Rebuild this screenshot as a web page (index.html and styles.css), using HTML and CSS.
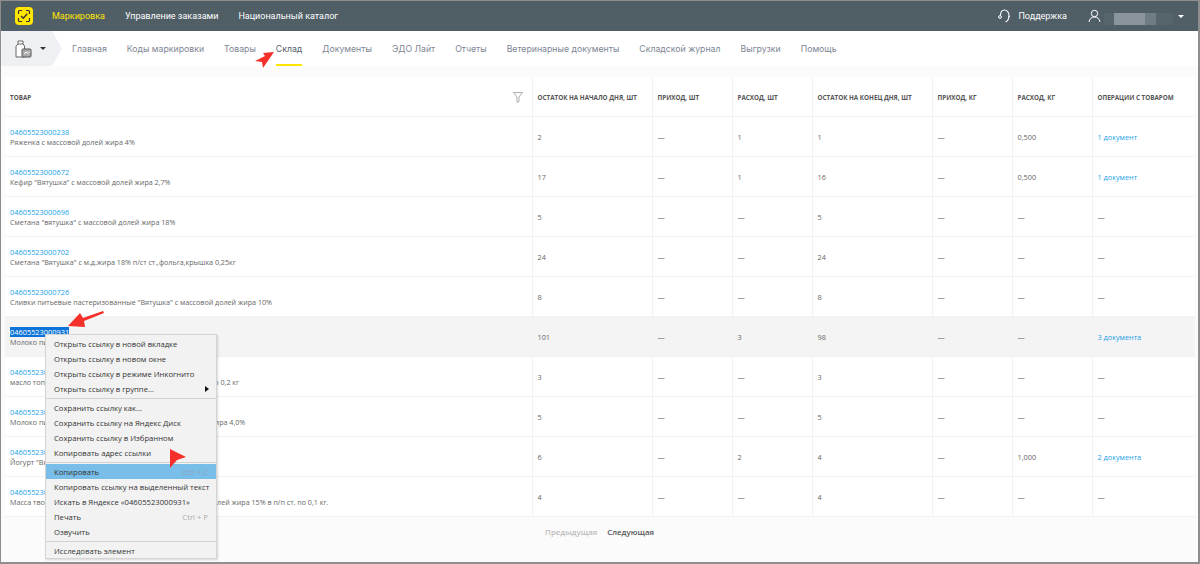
FILE: index.html
```html
<!DOCTYPE html>
<html lang="ru">
<head>
    <meta charset="UTF-8">
    <title>Склад</title>
    <link rel="stylesheet" href="styles.css">
</head>
<body>
    <div class="window">
        <header class="topbar">
            <svg class="logo" width="18" height="18" viewBox="0 0 18 18">
                <rect width="18" height="18" rx="4" fill="#ffe600"/>
                <path d="M3.500 7V4.500a1 1 0 0 1 1-1H7M11 3.500h2.500a1 1 0 0 1 1 1V7M14.500 11v2.500a1 1 0 0 1-1 1H11M7 14.500H4.500a1 1 0 0 1-1-1V11" fill="none" stroke="#333" stroke-width="1.200"/>
                <path d="M6 9l2.200 2.200L12.300 6.800" fill="none" stroke="#333" stroke-width="1.300"/>
            </svg>
            <nav class="topnav">
                <a class="active">Маркировка</a>
                <a>Управление заказами</a>
                <a>Национальный каталог</a>
            </nav>
            <div class="support">
                <svg width="13" height="14" viewBox="0 0 13 14"><path d="M2.500 6.500C2.500 3 4 1 6.500 1s4.500 2.500 4.500 5.500c0 3-1 5.500-3.500 6.500" fill="none" stroke="#fff" stroke-width="1.100"/><circle cx="2" cy="8" r="1.400" fill="none" stroke="#fff"/><circle cx="11" cy="7.500" r=".8" fill="#fff"/></svg>
                <span>Поддержка</span>
            </div>
            <div class="user">
                <svg width="13" height="14" viewBox="0 0 13 14"><circle cx="6.500" cy="4.500" r="3.200" fill="none" stroke="#fff"/><path d="M1 13c.5-3 2.300-5 5.500-5s5 2 5.500 5" fill="none" stroke="#fff"/></svg>
                <span class="blur"></span>
                <span class="caret"></span>
            </div>
        </header>

        <nav class="subnav">
            <div class="product-switch">
                <svg width="17" height="18" viewBox="0 0 17 18"><path d="M3 1h5v3l1.500 2v11H1V6l2-2z" fill="#fff" stroke="#666"/><path d="M3 4h5" stroke="#666"/><rect x="7" y="9" width="9" height="8" rx="1" fill="#aaa" stroke="#555"/><path d="M9 14l2-2 2 1.500 2-2" fill="none" stroke="#fff"/></svg>
                <span class="caret dark"></span>
            </div>
            <a>Главная</a>
            <a>Коды маркировки</a>
            <a>Товары</a>
            <a class="current">Склад</a>
            <a>Документы</a>
            <a>ЭДО Лайт</a>
            <a>Отчеты</a>
            <a>Ветеринарные документы</a>
            <a>Складской журнал</a>
            <a>Выгрузки</a>
            <a>Помощь</a>
        </nav>

        <main class="content">
            <table class="stock">
                <colgroup>
                    <col class="c-name"><col class="c-wide"><col class="c-mid"><col class="c-mid"><col class="c-wide"><col class="c-mid"><col class="c-mid"><col>
                </colgroup>
                <thead>
                    <tr>
                        <th>
                            <div class="th-name">Товар
                                <svg width="10" height="11" viewBox="0 0 10 11"><path d="M.5.500h9L6 5v4.500L4 10.500V5z" fill="none" stroke="#999" stroke-width=".8"/></svg>
                            </div>
                        </th>
                        <th>Остаток на начало дня, шт</th>
                        <th>Приход, шт</th>
                        <th>Расход, шт</th>
                        <th>Остаток на конец дня, шт</th>
                        <th>Приход, кг</th>
                        <th>Расход, кг</th>
                        <th>Операции с товаром</th>
                    </tr>
                </thead>
                <tbody>
                    <tr>
                        <td><a>04605523000238</a><p>Ряженка с массовой долей жира 4%</p></td>
                        <td>2</td><td>—</td><td>1</td><td>1</td><td>—</td><td>0,500</td><td><a>1 документ</a></td>
                    </tr>
                    <tr>
                        <td><a>04605523000672</a><p>Кефир "Вятушка" с массовой долей жира 2,7%</p></td>
                        <td>17</td><td>—</td><td>1</td><td>16</td><td>—</td><td>0,500</td><td><a>1 документ</a></td>
                    </tr>
                    <tr>
                        <td><a>04605523000696</a><p>Сметана "вятушка" с массовой долей жира 18%</p></td>
                        <td>5</td><td>—</td><td>—</td><td>5</td><td>—</td><td>—</td><td>—</td>
                    </tr>
                    <tr>
                        <td><a>04605523000702</a><p>Сметана "Вятушка" с м.д.жира 18% п/ст ст.,фольга,крышка 0,25кг</p></td>
                        <td>24</td><td>—</td><td>—</td><td>24</td><td>—</td><td>—</td><td>—</td>
                    </tr>
                    <tr>
                        <td><a>04605523000726</a><p>Сливки питьевые пастеризованные "Вятушка" с массовой долей жира 10%</p></td>
                        <td>8</td><td>—</td><td>—</td><td>8</td><td>—</td><td>—</td><td>—</td>
                    </tr>
                    <tr class="hovered">
                        <td><a class="selected">04605523000931</a><p>Молоко питьевое</p></td>
                        <td>101</td><td>—</td><td>3</td><td>98</td><td>—</td><td>—</td><td><a>3 документа</a></td>
                    </tr>
                    <tr>
                        <td><a>04605523000948</a><p>масло топленое "Вятушка" с массовой долей жира 99,0% по 0,2 кг</p></td>
                        <td>3</td><td>—</td><td>—</td><td>3</td><td>—</td><td>—</td><td>—</td>
                    </tr>
                    <tr>
                        <td><a>04605523000955</a><p>Молоко питьевое отборное "Вятушка" с массовой долей жира 4,0%</p></td>
                        <td>5</td><td>—</td><td>—</td><td>5</td><td>—</td><td>—</td><td>—</td>
                    </tr>
                    <tr>
                        <td><a>04605523000962</a><p>Йогурт "Вятушка"</p></td>
                        <td>6</td><td>—</td><td>2</td><td>4</td><td>—</td><td>1,000</td><td><a>2 документа</a></td>
                    </tr>
                    <tr>
                        <td><a>04605523000979</a><p>Масса творожная с наполнителем "Вятушка" с массовой долей жира 15% в п/п ст. по 0,1 кг.</p></td>
                        <td>4</td><td>—</td><td>—</td><td>4</td><td>—</td><td>—</td><td>—</td>
                    </tr>
                </tbody>
            </table>
            <div class="pager">
                <span class="off">Предыдущая</span>
                <span>Следующая</span>
            </div>
        </main>

        <ul class="context-menu">
            <li>Открыть ссылку в новой вкладке</li>
            <li>Открыть ссылку в новом окне</li>
            <li>Открыть ссылку в режиме Инкогнито</li>
            <li class="has-sub">Открыть ссылку в группе...</li>
            <li class="sep"></li>
            <li>Сохранить ссылку как...</li>
            <li>Сохранить ссылку на Яндекс Диск</li>
            <li>Сохранить ссылку в Избранном</li>
            <li>Копировать адрес ссылки</li>
            <li class="sep"></li>
            <li class="picked">Копировать<span>Ctrl + C</span></li>
            <li>Копировать ссылку на выделенный текст</li>
            <li>Искать в Яндексе «04605523000931»</li>
            <li>Печать<span>Ctrl + P</span></li>
            <li>Озвучить</li>
            <li class="sep"></li>
            <li>Исследовать элемент</li>
        </ul>

        <svg class="arrow arrow-nav" width="24" height="20" viewBox="0 0 24 20"><path d="M21 2L10 3l2 3L2 11l7 1 1 6z" fill="#f5302a"/></svg>
        <svg class="arrow arrow-link" width="38" height="20" viewBox="0 0 38 20"><path d="M1 16L13 3l3 5 20-7 1 2-20 8 1 6z" fill="#f5302a"/></svg>
        <svg class="arrow arrow-copy" width="18" height="20" viewBox="0 0 18 20"><path d="M1 0l16 8-9 3-7 8z" fill="#f5302a"/></svg>
    </div>
</body>
</html>
```

FILE: styles.css
```css
* {
    box-sizing: border-box;
}

html, body {
    margin: 0;
    height: 100%;
}

body {
    font-family: "Open Sans", "Liberation Sans", sans-serif;
    background-color: #fff;
    overflow: hidden;
}

.window {
    position: relative;
    width: 1200px;
    height: 564px;
    border: 1px solid #8e8e8e;
    border-width: 1px 2px 2px 1px;
    background-color: #fbfbfb;
    overflow: hidden;
}

.topbar {
    display: flex;
    align-items: center;
    height: 30px;
    padding-left: 14px;
    background-color: #505e66;
    color: #fff;
    font-family: Roboto, sans-serif;
    font-size: 9px;
}

.logo {
    flex: none;
}

.topnav {
    display: flex;
    gap: 20px;
    margin-left: 19px;
    flex: 1;
}

.topnav .active {
    color: #ffe600;
}

.support {
    display: flex;
    align-items: center;
    gap: 7px;
    margin-right: 21px;
}

.user {
    display: flex;
    align-items: center;
    gap: 3px;
    width: 110px;
}

.blur {
    width: 69px;
    height: 12px;
    margin-top: 6px;
    background: linear-gradient(90deg, #56646c 0 14%, #8a959b 14% 60%, #6f7c83 60% 75%, #56646c 75%);
}

.caret {
    width: 0;
    height: 0;
    margin-left: 2px;
    border: 3px solid transparent;
    border-top: 3px solid #fff;
    border-bottom: 0;
}

.caret.dark {
    margin-left: 0;
    border-top-color: #333;
}

.subnav {
    display: flex;
    align-items: center;
    gap: 20px;
    height: 35px;
    background-color: #fff;
    color: #7d8694;
    font-family: Inter, sans-serif;
    font-size: 8.730px;
}

.subnav a {
    display: flex;
    align-items: center;
    height: 100%;
    white-space: nowrap;
}

.subnav .current {
    color: #53606a;
    box-shadow: inset 0 -2px 0 #ffe600;
}

.product-switch {
    display: flex;
    align-items: center;
    gap: 8px;
    width: 61px;
    height: 100%;
    margin-right: -10px;
    padding-left: 14px;
    background-color: #eef0f3;
    clip-path: polygon(0 0, 51px 0, 61px 50%, 51px 100%, 0 100%);
}

.content {
    padding: 11px 3px 0 4px;
}

.stock {
    width: 1190px;
    table-layout: fixed;
    border-collapse: collapse;
    background-color: #fff;
    font-size: 7.300px;
    color: #666;
}

.c-name {
    width: 527px;
}

.c-wide {
    width: 120px;
}

.c-mid {
    width: 80px;
}

.stock th, .stock td {
    height: 40px;
    padding: 2px 5px 0;
    border-left: 1px solid #f7f0f0;
    border-bottom: 1px solid #f5f0f0;
    text-align: left;
    white-space: nowrap;
    overflow: hidden;
}

.stock th:first-child, .stock td:first-child {
    border-left: 0;
}

.stock th {
    height: 39px;
    padding-top: 3px;
    font-size: 6.300px;
    font-weight: 700;
    text-transform: uppercase;
    color: #555;
}

.th-name {
    display: flex;
    justify-content: space-between;
    align-items: center;
    padding-right: 4px;
}

.stock a {
    color: #1a9fe8;
}

.stock td:first-child a {
    display: inline-block;
    line-height: 10px;
    font-size: 7.400px;
}

.stock p {
    margin: 0;
    line-height: 10px;
    font-size: 7.150px;
    color: #666;
}

.hovered td {
    background-color: #f4f4f4;
}

.stock td .selected {
    background-color: #0a74d8;
    color: #fff;
}

.pager {
    display: flex;
    justify-content: flex-end;
    gap: 10px;
    padding: 10px 541px 0 0;
    font-size: 7.900px;
    font-weight: 600;
    color: #555;
}

.pager .off {
    color: #bbb;
}

.context-menu {
    position: absolute;
    left: 44px;
    top: 333px;
    width: 172px;
    height: 225px;
    margin: 0;
    padding: 1px 0;
    list-style: none;
    background-color: #f2f2f2;
    border: 1px solid #d4d4d4;
    box-shadow: 1px 1px 2px rgba(0, 0, 0, 0.15);
    font-size: 7.700px;
    color: #333;
}

.context-menu li {
    display: flex;
    justify-content: space-between;
    align-items: center;
    height: 15px;
    padding: 0 8px;
    white-space: nowrap;
}

.context-menu .sep {
    height: 1px;
    margin: 1.500px 0;
    padding: 0;
    background-color: #d2d2d2;
}

.context-menu li span {
    color: #aaa;
}

.context-menu .picked {
    background-color: #79bde9;
}

.context-menu .picked span {
    color: #8fa5b5;
}

.has-sub::after {
    content: "";
    border: 3px solid transparent;
    border-left: 4px solid #111;
    border-right: 0;
    margin-right: -1px;
}

.arrow {
    position: absolute;
}

.arrow-nav {
    left: 252px;
    top: 49px;
}

.arrow-link {
    left: 66px;
    top: 309px;
}

.arrow-copy {
    left: 168px;
    top: 448px;
}
```
